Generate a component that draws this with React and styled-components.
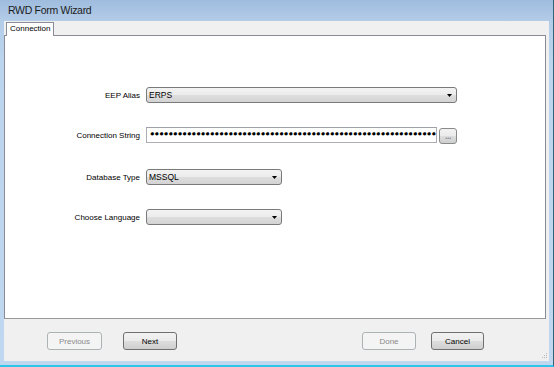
import React from "react";
import styled, { createGlobalStyle } from "styled-components";

const GlobalStyle = createGlobalStyle`
  html, body {
    margin: 0;
    padding: 0;
    background: #bcd5ee;
  }
  * {
    box-sizing: border-box;
  }
`;

const ui = `"Liberation Sans", Arial, sans-serif`;

const Window = styled.div`
  width: 554px;
  height: 367px;
  display: flex;
  flex-direction: column;
  padding: 0 4px 4px 4px;
  background: linear-gradient(#9fbcde 0px, #b3cce8 21px, #bcd5ee 60px, #bfd7ef 100%);
  border-right: 1px solid #2f6479;
  border-bottom: 2px solid #2fc4ea;
  font-family: ${ui};
`;

const TitleBar = styled.div`
  height: 21px;
  line-height: 21px;
  padding-left: 4px;
  font-size: 10.5px;
  letter-spacing: -0.3px;
  color: #1c1c1c;
`;

const Client = styled.div`
  flex: 1;
  display: flex;
  flex-direction: column;
  background: #f0f0f0;
  position: relative;
`;

const TabStrip = styled.div`
  height: 14px;
  display: flex;
  align-items: flex-end;
  padding-left: 2px;
`;

const Tab = styled.div`
  position: relative;
  z-index: 1;
  height: 14px;
  margin-bottom: -1px;
  padding: 0 3px 0 3px;
  background: #ffffff;
  border: 1px solid #898c95;
  border-bottom: none;
  font-size: 8px;
  line-height: 12px;
  color: #000;
`;

const TabPanel = styled.div`
  height: 284px;
  margin-right: 3px;
  background: #ffffff;
  border: 1px solid #898c95;
  border-bottom-color: #9a9a9a;
`;

const Form = styled.div`
  display: flex;
  flex-direction: column;
  padding-top: 51px;
`;

const Row = styled.div`
  display: flex;
  align-items: center;
  gap: 6px;
  height: 16px;
  margin-top: ${(p) => p.$space || 0}px;
`;

const Label = styled.div`
  width: 135px;
  text-align: right;
  font-size: 8px;
  color: #000;
`;

const Combo = styled.div`
  width: ${(p) => p.$width}px;
  height: 16px;
  display: flex;
  align-items: center;
  justify-content: space-between;
  padding: 0 4px 0 2px;
  border: 1px solid #7a7a7a;
  border-radius: 3px;
  background: linear-gradient(#f3f3f3, #ebebeb 50%, #dedede 51%, #d3d3d3);
  font-size: 8.5px;
  color: #000;
`;

const Arrow = () => (
  <svg width="5" height="3" viewBox="0 0 5 3">
    <path d="M0 0 H5 L2.5 3 Z" fill="#000" />
  </svg>
);

const TextBox = styled.div`
  width: 291px;
  height: 16px;
  display: flex;
  align-items: center;
  padding-left: 3px;
  overflow: hidden;
  background: #fff;
  border: 1px solid #abadb3;
  border-top-color: #9ea1a8;
`;

const Dots = styled.span`
  font-family: "Liberation Mono", monospace;
  font-size: 7.7px;
  line-height: 1;
  color: #000;
  white-space: nowrap;
`;

const EllipsisButton = styled.div`
  width: 18px;
  height: 16px;
  margin-left: -4px;
  margin-top: 2px;
  padding-top: 3px;
  text-align: center;
  border: 1px solid #8a8a8a;
  border-radius: 3px;
  background: linear-gradient(#f2f2f2, #ebebeb 50%, #dddddd 51%, #cfcfcf);
  font-size: 9px;
  line-height: 9px;
  font-weight: bold;
  letter-spacing: -0.5px;
  color: #8c8ca0;
`;

const ButtonBar = styled.div`
  flex: 1;
  display: flex;
  justify-content: space-between;
  align-items: flex-start;
  padding: 13px 65px 0 43px;
`;

const Group = styled.div`
  display: flex;
  gap: ${(p) => p.$gap}px;
`;

const Button = styled.button`
  width: ${(p) => p.$width || 54}px;
  height: 18px;
  padding: 0;
  border-radius: 3px;
  font-family: ${ui};
  font-size: 8px;
  border: 1px solid #707070;
  background: linear-gradient(#f2f2f2, #ebebeb 50%, #dddddd 51%, #cfcfcf);
  color: #000;
  &:disabled {
    border-color: #adb2b5;
    background: #f4f4f4;
    color: #8a8a8a;
  }
`;

const Grip = styled.svg`
  position: absolute;
  right: 1px;
  bottom: 2px;
`;

const password = "\u25CF".repeat(62);

export default function App() {
  return (
    <>
      <GlobalStyle />
      <Window>
        <TitleBar>RWD Form Wizard</TitleBar>
        <Client>
          <TabStrip>
            <Tab>Connection</Tab>
          </TabStrip>
          <TabPanel>
            <Form>
              <Row>
                <Label>EEP Alias</Label>
                <Combo $width={311}>
                  ERPS
                  <Arrow />
                </Combo>
              </Row>
              <Row $space={24}>
                <Label>Connection String</Label>
                <TextBox>
                  <Dots>{password}</Dots>
                </TextBox>
                <EllipsisButton>...</EllipsisButton>
              </Row>
              <Row $space={26}>
                <Label>Database Type</Label>
                <Combo $width={136}>
                  MSSQL
                  <Arrow />
                </Combo>
              </Row>
              <Row $space={24}>
                <Label>Choose Language</Label>
                <Combo $width={136}>
                  <span />
                  <Arrow />
                </Combo>
              </Row>
            </Form>
          </TabPanel>
          <ButtonBar>
            <Group $gap={21}>
              <Button $width={55} disabled>
                Previous
              </Button>
              <Button>Next</Button>
            </Group>
            <Group $gap={15}>
              <Button disabled>Done</Button>
              <Button $width={53}>Cancel</Button>
            </Group>
          </ButtonBar>
          <Grip width="6" height="6" viewBox="0 0 6 6">
            <g fill="#b8b8b8">
              <rect x="4" y="0" width="1" height="1" />
              <rect x="2" y="2" width="1" height="1" />
              <rect x="4" y="2" width="1" height="1" />
              <rect x="0" y="4" width="1" height="1" />
              <rect x="2" y="4" width="1" height="1" />
              <rect x="4" y="4" width="1" height="1" />
            </g>
          </Grip>
        </Client>
      </Window>
    </>
  );
}
